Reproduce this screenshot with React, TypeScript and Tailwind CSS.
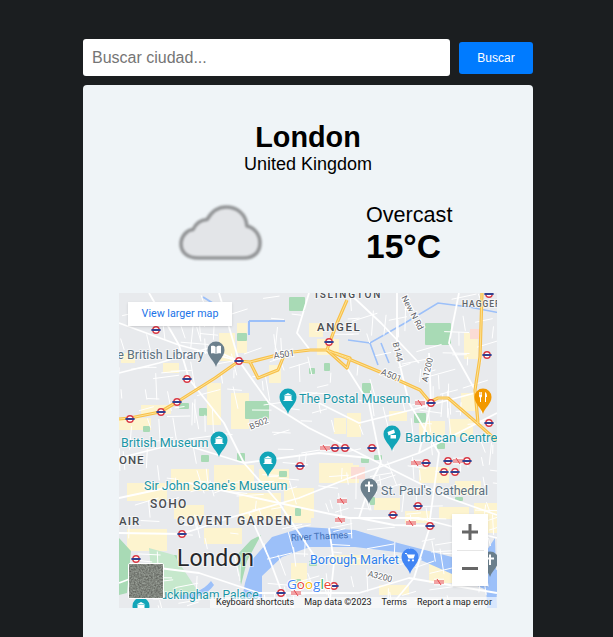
const STREETS_MAJOR = [
  'M0 30 L60 52 L120 68 L150 110 L190 135 L250 165 L330 205 L378 222',
  'M30 0 L60 52 L70 86 L105 130 L125 170 L160 210 L200 270',
  'M0 80 L40 70 L90 55 L120 68',
  'M0 165 L60 150 L125 170 L200 160 L250 165',
  'M0 205 L70 190 L160 210 L230 225 L300 225 L378 245',
  'M0 240 L63 241 L110 225 L180 205 L230 185 L300 160 L378 120',
  'M130 220 L150 265 L165 305 L175 315',
  'M262 170 L250 194 L240 225',
  'M240 225 L275 232 L311 233 L295 285 L270 315',
  'M278 0 L278 60 L290 110 L320 160 L310 233',
  'M310 60 L312 110 L300 160',
  'M228 75 L250 110 L262 170',
  'M0 290 L40 275 L80 280 L140 300 L200 300 L240 300 L290 285 L378 300',
  'M200 110 L240 130 L300 115 L356 100',
  'M190 0 L178 40 L191 57',
  'M230 0 L262 30 L300 70',
  'M100 0 L120 68',
  'M210 235 L215 270 L210 315',
  'M340 0 L330 50 L356 97',
]

const CANAL = 'M229 47 L251 50 L286 30 L319 10 L350 14 L381 20'

const MOTORWAY = [
  'M0 126 L11 125 L41 119 L58 109 L96 85 L120 68 L131 69 L166 60 L191 57 L208 57 L261 79 L301 97 L311 109 L319 105 L329 105 L358 130 L378 148',
  'M363 0 L361 64 L356 97 L359 130',
  'M228 7 L218 30 L209 54 L208 57',
  'M131 69 L139 85 L159 77 L166 60',
  'M208 57 L228 75 L231 65 L216 60',
]

const BLOCKS: [number, number, number, number][] = [
  [0, 125, 32, 12], [22, 112, 30, 9], [100, 40, 16, 28], [88, 90, 14, 42], [112, 100, 18, 36], [150, 72, 12, 18],
  [118, 30, 10, 30], [198, 46, 22, 16], [190, 30, 14, 14], [345, 40, 14, 26], [342, 100, 16, 18], [330, 126, 24, 18],
  [228, 120, 14, 24], [300, 128, 26, 14], [270, 118, 18, 10], [8, 190, 40, 18], [52, 176, 38, 22], [95, 172, 40, 26],
  [140, 176, 30, 18], [8, 236, 40, 22], [55, 212, 30, 14], [85, 235, 38, 16], [120, 200, 42, 26], [165, 195, 30, 30],
  [200, 170, 34, 20], [230, 172, 10, 18], [255, 205, 26, 12], [300, 174, 30, 16], [336, 188, 26, 14], [286, 218, 26, 12],
  [320, 214, 30, 12], [172, 270, 16, 20], [210, 262, 40, 10], [260, 292, 30, 10], [310, 270, 24, 20], [172, 218, 20, 12],
  [2, 60, 14, 10], [44, 70, 16, 10], [215, 125, 12, 16], [355, 210, 23, 30],
]

const PARKS: [number, number, number, number][] = [
  [170, 4, 16, 14], [306, 30, 26, 22], [295, 120, 12, 10], [126, 108, 24, 18], [243, 90, 9, 10], [118, 40, 10, 8],
  [60, 110, 10, 6], [80, 115, 8, 8], [24, 133, 7, 6], [205, 70, 6, 8], [190, 75, 6, 6], [255, 162, 8, 5],
  [82, 162, 8, 7], [118, 160, 8, 8], [160, 178, 8, 6], [48, 262, 10, 12], [56, 282, 12, 8], [318, 150, 8, 6],
  [242, 164, 8, 6], [176, 286, 6, 7], [250, 204, 6, 8], [336, 204, 8, 4], [176, 215, 6, 8], [190, 268, 8, 5],
]

const TUBE: [number, number][] = [
  [37, 37], [68, 86], [120, 68], [58, 109], [42, 119], [11, 126], [210, 49], [312, 110], [368, 62], [370, 130],
  [370, 1], [216, 155], [226, 155], [253, 155], [181, 173], [63, 241], [17, 266], [162, 300], [307, 170], [329, 168],
  [348, 168], [325, 179], [336, 179], [299, 213], [274, 222], [311, 233], [215, 293],
]

const RAIL: [number, number][] = [
  [301, 110], [206, 155], [297, 170], [339, 168], [223, 208], [221, 227], [292, 230], [320, 289], [177, 300],
]

const LABELS = [
  { t: 'ISLINGTON', x: 196, y: 5, s: 10, c: '#4a4d52', w: 500, ls: 1.8 },
  { t: 'ANGEL', x: 198, y: 38, s: 11.5, c: '#4a4d52', w: 500, ls: 1.6 },
  { t: 'HAGGER', x: 343, y: 14, s: 8.5, c: '#5f6368', w: 500, ls: 1 },
  { t: 'The British Library', x: -16, y: 66, s: 12.5, c: '#5b7080', w: 400, ls: 0 },
  { t: 'The Postal Museum', x: 180, y: 110, s: 12.5, c: '#1a96a6', w: 400, ls: 0 },
  { t: 'British Museum', x: 2, y: 154, s: 12.5, c: '#1a96a6', w: 400, ls: 0 },
  { t: 'Barbican Centre', x: 286, y: 149, s: 13, c: '#1a96a6', w: 400, ls: 0 },
  { t: "Sir John Soane's Museum", x: 25, y: 197, s: 12.5, c: '#1a96a6', w: 400, ls: 0 },
  { t: 'ONE', x: 0, y: 171, s: 11.5, c: '#4a4d52', w: 500, ls: 1 },
  { t: 'SOHO', x: 31, y: 215, s: 12, c: '#4a4d52', w: 500, ls: 1.3 },
  { t: 'AIR', x: 0, y: 232, s: 11.5, c: '#4a4d52', w: 500, ls: 1 },
  { t: 'COVENT GARDEN', x: 58, y: 232, s: 12, c: '#4a4d52', w: 500, ls: 1.6 },
  { t: 'London', x: 58, y: 273, s: 23, c: '#26282b', w: 400, ls: 0 },
  { t: 'Buckingham Palace', x: 34, y: 306, s: 12, c: '#1a96a6', w: 400, ls: 0 },
  { t: "St. Paul's Cathedral", x: 262, y: 202, s: 12.5, c: '#5b7080', w: 400, ls: 0 },
  { t: 'Borough Market', x: 191, y: 271, s: 12.5, c: '#2f80ed', w: 400, ls: 0 },
]

const ROTATED = [
  { t: 'New N Rd', x: 293, y: 20, r: 62, s: 8.5 },
  { t: 'B144', x: 278, y: 59, r: 76, s: 8.5 },
  { t: 'A1200', x: 309, y: 77, r: -76, s: 8.5 },
  { t: 'A501', x: 272, y: 83, r: 22, s: 9 },
  { t: 'A501', x: 165, y: 62, r: -8, s: 9 },
  { t: 'B502', x: 140, y: 131, r: -22, s: 8.5 },
  { t: 'A3200', x: 261, y: 284, r: 14, s: 8.5 },
]

const PINS = [
  { x: 97, y: 57, c: '#6b7f8c', k: 'book' },
  { x: 169, y: 104, c: '#12a5b8', k: 'museum' },
  { x: 100, y: 147, c: '#12a5b8', k: 'museum' },
  { x: 149, y: 167, c: '#12a5b8', k: 'museum' },
  { x: 273, y: 141, c: '#12a5b8', k: 'art' },
  { x: 250, y: 194, c: '#6b7f8c', k: 'cross' },
  { x: 364, y: 104, c: '#f29900', k: 'food' },
  { x: 291, y: 264, c: '#4285f4', k: 'cart' },
  { x: 22, y: 313, c: '#12a5b8', k: 'museum' },
  { x: 371, y: 267, c: '#6b7f8c', k: 'cross' },
]

// small fixed-seed mesh for the side streets
function sideStreets() {
  let seed = 17
  const rnd = () => {
    seed = (seed * 16807) % 2147483647
    return seed / 2147483647
  }
  const out: string[] = []
  for (let i = 0; i < 320; i++) {
    const x = rnd() * 378
    const y = rnd() * 315
    const a = (i % 2 ? -0.35 : 1.2) + rnd() * 0.5
    const l = 8 + rnd() * 20
    const x2 = x + Math.cos(a) * l
    const y2 = y + Math.sin(a) * l
    out.push(`M${x.toFixed(1)} ${y.toFixed(1)} L${x2.toFixed(1)} ${y2.toFixed(1)}`)
  }
  return out
}

function Pin({ x, y, c, k }: { x: number; y: number; c: string; k: string }) {
  return (
    <g transform={`translate(${x} ${y})`}>
      <path d="M0 17 C-1.5 11 -8.5 7 -8.5 0 A8.5 8.5 0 0 1 8.5 0 C8.5 7 1.5 11 0 17 Z" fill={c} />
      {k === 'museum' && <path d="M-4.5 -1.5 L0 -4 L4.5 -1.5 Z M-3.5 -1 H3.5 V3 H-3.5 Z M-4.5 3 H4.5 V4 H-4.5 Z" fill="#fff" />}
      {k === 'book' && <path d="M-5 -4 C-3 -4.6 -1.2 -4.2 -0.4 -3.2 V4 C-1.2 3.2 -3 3 -5 3.4 Z M5 -4 C3 -4.6 1.2 -4.2 0.4 -3.2 V4 C1.2 3.2 3 3 5 3.4 Z" fill="#fff" />}
      {k === 'cross' && <path d="M-1 -5.5 H1 V-2.5 H4 V-0.5 H1 V5 H-1 V-0.5 H-4 V-2.5 H-1 Z" fill="#fff" />}
      {k === 'food' && <path d="M-4 -5 V-1 C-4 0 -3.2 0.4 -3 0.6 V5 H-2 V0.6 C-1.8 0.4 -1 0 -1 -1 V-5 H-1.8 V-2 H-2.2 V-5 H-2.8 V-2 H-3.2 V-5 Z M2 -5 C3.5 -4.5 4 -2.5 4 0 H3 V5 H2 Z" fill="#fff" />}
      {k === 'cart' && <path d="M-5 -4 H-3.2 L-2.6 -2.6 H5 L3.6 1.4 H-1.4 L-3.6 -3 H-5 Z M-1.2 2.2 A1.1 1.1 0 1 0 -1.19 2.2 Z M3 2.2 A1.1 1.1 0 1 0 3.01 2.2 Z" fill="#fff" />}
      {k === 'art' && <path d="M-4.5 -2 L2 -4.5 L3 -1 L-3.5 1.5 Z M-1.5 1 H4 V4.5 H-1.5 Z" fill="#fff" />}
    </g>
  )
}

function CityMap() {
  return (
    <svg viewBox="0 0 378 315" className="block h-[315px] w-[378px]" style={{ fontFamily: 'Roboto, sans-serif' }}>
      <defs>
        <filter id="soft" x="0" y="0" width="1" height="1">
          <feGaussianBlur stdDeviation="0.4" />
        </filter>
      </defs>
      <rect width="378" height="315" fill="#e8eaed" />
      <g filter="url(#soft)">
        {BLOCKS.map(([x, y, w, h], i) => (
          <rect key={i} x={x} y={y} width={w} height={h} fill="#fdf4cf" />
        ))}
        {PARKS.map(([x, y, w, h], i) => (
          <rect key={i} x={x} y={y} width={w} height={h} rx="1" fill="#a8dab5" />
        ))}
        <rect x="351" y="36" width="12" height="10" fill="#fbdcd6" />
        <rect x="232" y="174" width="14" height="12" fill="#fbdcd6" />
        <path d="M0 245 L12 258 L8 300 L0 302 Z" fill="#a8dab5" />
        <path d="M30 255 L55 262 L80 300 L60 304 L34 300 Z" fill="#c6e8cc" />
        <path d="M118 262 L132 247 L142 242 L128 268 L122 292 Z" fill="#a8dab5" />
        <path d="M60 302 C72 302 84 298 92 288 L95 292 C88 302 76 306 62 306 Z" fill="#9cc0f9" />
        <path d="M378 277 L333 264 L279 250 L236 237 L186 234 L153 244 L133 267 L126 290 L123 306 L143 306 L143 283 L163 264 L191 254 L236 254 L286 260 L333 281 L378 302 Z" fill="#9cc0f9" />
        <path d="M376 245 L378 315 L368 315 L366 260 Z" fill="#9cc0f9" />
        <path d={CANAL} fill="none" stroke="#9cc0f9" strokeWidth="1.6" />
        <path d="M251 50 L259 72 M262 50 L270 70" fill="none" stroke="#9cc0f9" strokeWidth="1.6" />
        <path d="M84 4 L100 14 M130 28 H166 M130 28 V42" fill="none" stroke="#9cc0f9" strokeWidth="2" />
        {sideStreets().map((d, i) => (
          <path key={i} d={d} fill="none" stroke="#fff" strokeWidth="1" />
        ))}
        {STREETS_MAJOR.map((d, i) => (
          <path key={i} d={d} fill="none" stroke="#fff" strokeWidth="1.8" strokeLinejoin="round" />
        ))}
        {MOTORWAY.map((d, i) => (
          <path key={i} d={d} fill="none" stroke="#f8c04a" strokeWidth="3.2" strokeLinejoin="round" />
        ))}
        {MOTORWAY.map((d, i) => (
          <path key={i} d={d} fill="none" stroke="#fde293" strokeWidth="1" strokeLinejoin="round" />
        ))}
      </g>
      {RAIL.map(([x, y], i) => (
        <g key={i} transform={`translate(${x} ${y})`} fill="none" stroke="#e5484d" strokeWidth="1">
          <rect x="-5" y="-3.5" width="10" height="7" fill="#fff" fillOpacity="0.6" stroke="none" />
          <path d="M-5 -1 H5 M-5 1 H5 M-2 -3 L2 3" />
        </g>
      ))}
      {TUBE.map(([x, y], i) => (
        <g key={i} transform={`translate(${x} ${y})`}>
          <circle r="3.2" fill="#fff" stroke="#d93a45" strokeWidth="1.4" />
          <rect x="-4.6" y="-1" width="9.2" height="2" fill="#33408f" />
        </g>
      ))}
      {ROTATED.map((l, i) => (
        <text
          key={i}
          transform={`translate(${l.x} ${l.y}) rotate(${l.r})`}
          textAnchor="middle"
          dominantBaseline="middle"
          fontSize={l.s}
          fill="#5f6368"
          stroke="#fff"
          strokeWidth="2"
          paintOrder="stroke"
        >
          {l.t}
        </text>
      ))}
      {PINS.map((p, i) => (
        <Pin key={i} {...p} />
      ))}
      {LABELS.map((l) => (
        <text
          key={l.t}
          x={l.x}
          y={l.y}
          fontSize={l.s}
          fontWeight={l.w}
          letterSpacing={l.ls}
          fill={l.c}
          stroke="#fff"
          strokeWidth="2"
          strokeOpacity="0.55"
          paintOrder="stroke"
        >
          {l.t}
        </text>
      ))}
      <text transform="translate(172 248) rotate(-3)" fontSize="9.5" fill="#3f6fb5">
        River Thames
      </text>
      <text x="168" y="296" fontSize="13.5" fontWeight="500" stroke="#fff" strokeWidth="2" paintOrder="stroke" style={{ fontFamily: '"Open Sans", sans-serif' }}>
        <tspan fill="#4285f4">G</tspan>
        <tspan fill="#ea4335">o</tspan>
        <tspan fill="#fbbc05">o</tspan>
        <tspan fill="#4285f4">g</tspan>
        <tspan fill="#34a853">l</tspan>
        <tspan fill="#ea4335">e</tspan>
      </text>
    </svg>
  )
}

export default function App() {
  return (
    <div className="h-[637px] overflow-hidden bg-[#1b1e20] pt-[39px] font-['Liberation_Sans',Arial,sans-serif]">
      <div className="ml-[83px] w-[450px]">
        <div className="flex items-center gap-[9px]">
          <input
            placeholder="Buscar ciudad..."
            className="h-[37px] w-[367px] rounded-[3px] bg-white px-[9px] text-base text-black outline-none placeholder:text-[#757575]"
          />
          <button className="h-[32px] w-[74px] rounded-[3px] bg-[#007bff] text-xs text-white">Buscar</button>
        </div>

        <div className="mt-[9px] h-[600px] rounded-[4px] bg-[#eff4f7] pt-[36px] text-center text-black">
          <h1 className="text-[28.8px] leading-[33px] font-bold">London</h1>
          <p className="text-[18px] leading-[20px]">United Kingdom</p>

          <div className="mt-[22px] flex h-[72px] items-start">
            <div className="ml-[96px] mt-[8px] w-[84px]">
              <svg viewBox="0 0 84 58" className="block h-[58px] w-[84px] blur-[0.8px]">
                <path
                  d="M19 54 C8 54 2 48 2 40 C2 32 8 26 14 25.5 C17 19 22 16 28 15.5 C33 7 40 3 47 3 C58 3 67 10 68 22 C76 24 81 31 81 39 C81 48 75 54 65 54 Z"
                  fill="#e3e5e8"
                  stroke="#929496"
                  strokeWidth="3.6"
                  strokeLinejoin="round"
                />
              </svg>
            </div>
            <div className="ml-[103px] pt-[7px] text-left">
              <p className="text-[21.6px] leading-[24px]">Overcast</p>
              <p className="text-[33.5px] leading-[40px] font-bold">15°C</p>
            </div>
          </div>

          <div className="relative mx-auto mt-[25px] h-[315px] w-[378px] overflow-hidden">
            <CityMap />
            <a className="absolute top-[9px] left-[9px] flex h-[24px] w-[104px] items-center justify-center bg-white font-['Roboto',sans-serif] text-[10.7px] text-[#1a73e8] shadow-sm">
              View larger map
            </a>
            <div className="absolute top-[221px] left-[333px] flex h-[72px] w-[36px] flex-col items-center bg-white shadow-sm">
              <svg viewBox="0 0 36 36" className="h-[36px] w-[36px]">
                <path d="M10 16.5 H16.5 V10 H19.5 V16.5 H26 V19.5 H19.5 V26 H16.5 V19.5 H10 Z" fill="#666" />
              </svg>
              <div className="h-px w-[27px] bg-[#e6e6e6]" />
              <svg viewBox="0 0 36 35" className="h-[35px] w-[36px]">
                <rect x="10" y="16" width="16" height="3" fill="#666" />
              </svg>
            </div>
            <div className="absolute top-[270px] left-[9px] h-[36px] w-[36px] overflow-hidden rounded-[2px] border border-white">
              <svg viewBox="0 0 36 36" className="h-full w-full">
                <filter id="sat">
                  <feTurbulence type="fractalNoise" baseFrequency="0.55" numOctaves="3" seed="5" />
                  <feColorMatrix values="0 0 0 0 0.33 0 0 0 0 0.36 0 0 0 0 0.32 1.6 0 0 0 -0.3" />
                </filter>
                <rect width="36" height="36" fill="#62655f" />
                <rect width="36" height="36" filter="url(#sat)" />
              </svg>
            </div>
            <div className="absolute right-0 bottom-0 left-[91px] flex h-[11px] items-center justify-end gap-[10px] bg-white/60 pr-[5px] font-['Roboto',sans-serif] text-[9px] leading-none whitespace-nowrap text-[#222]">
              <span>Keyboard shortcuts</span>
              <span>Map data ©2023</span>
              <span>Terms</span>
              <span>Report a map error</span>
            </div>
          </div>
        </div>
      </div>
    </div>
  )
}
